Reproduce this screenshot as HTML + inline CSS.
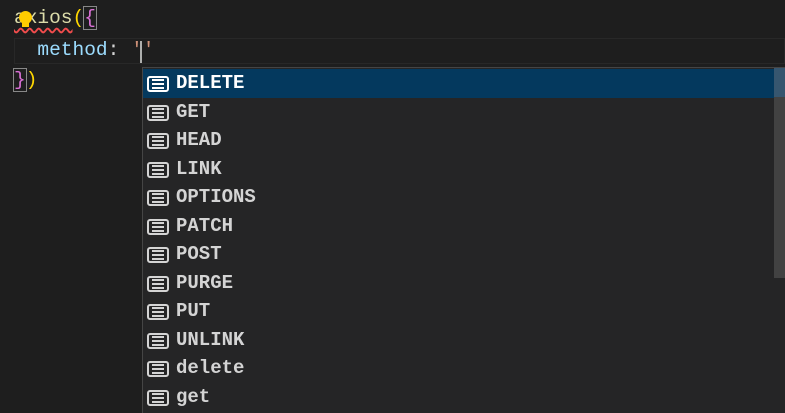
<!DOCTYPE html><html><head><style>
body{margin:0;width:785px;height:408px;background:#1e1e1e;overflow:hidden;position:relative;font-family:"Liberation Mono",monospace;font-size:19.5px}
.l{position:absolute;left:14px;white-space:pre;height:29px;line-height:29px}
.cur{position:absolute;left:14px;top:38px;width:771px;height:26px;border:1px solid #282828;box-sizing:border-box}
.w{position:absolute;left:142px;top:67px;width:643px;height:345px;background:#252526;border-left:1px solid #454545;border-top:1px solid #454545}
.r{position:absolute;left:0;width:631px;height:29px;line-height:29px;color:#d4d4d4;font-weight:bold;font-size:19px}
.r.s{background:#04395e;color:#fff}
.ic{position:absolute;left:4px;top:7px;width:18px;height:12px;border:2px solid currentColor;border-radius:3px}
.ic i{position:absolute;left:3px;width:12px;height:2px;background:currentColor}
.t{position:absolute;left:33px}
.sb{position:absolute;left:631px;top:0;width:12px;height:210px;background:#424242}
</style></head><body>
<div class="cur"></div>
<div class="l" style="top:4px"><span style="color:#dcdcaa;text-decoration:underline wavy #f14c4c;text-underline-offset:4px">axios</span><span style="color:#ffd700">(</span><span style="color:#da70d6;outline:1px solid #888">{</span></div>
<div class="l" style="top:36px">  <span style="color:#9cdcfe">method</span><span style="color:#d4d4d4">: </span><span style="color:#ce9178">''</span></div>
<div style="position:absolute;left:140px;top:41px;width:2px;height:22px;background:#aeafad"></div>
<div class="l" style="top:66px"><span style="color:#da70d6;outline:1px solid #888">}</span><span style="color:#ffd700">)</span></div>
<div style="position:absolute;left:19px;top:11px;width:13px;height:13px;border-radius:50%;background:#ffcc00"></div>
<div style="position:absolute;left:22px;top:22px;width:7px;height:5px;background:#ffcc00"></div>
<div class="w">
<div class="r s" style="top:1px"><span class="ic"><i style="top:1px"></i><i style="top:5px"></i><i style="top:9px"></i></span><span class="t">DELETE</span></div>
<div class="r" style="top:30px"><span class="ic"><i style="top:1px"></i><i style="top:5px"></i><i style="top:9px"></i></span><span class="t">GET</span></div>
<div class="r" style="top:58px"><span class="ic"><i style="top:1px"></i><i style="top:5px"></i><i style="top:9px"></i></span><span class="t">HEAD</span></div>
<div class="r" style="top:87px"><span class="ic"><i style="top:1px"></i><i style="top:5px"></i><i style="top:9px"></i></span><span class="t">LINK</span></div>
<div class="r" style="top:115px"><span class="ic"><i style="top:1px"></i><i style="top:5px"></i><i style="top:9px"></i></span><span class="t">OPTIONS</span></div>
<div class="r" style="top:144px"><span class="ic"><i style="top:1px"></i><i style="top:5px"></i><i style="top:9px"></i></span><span class="t">PATCH</span></div>
<div class="r" style="top:172px"><span class="ic"><i style="top:1px"></i><i style="top:5px"></i><i style="top:9px"></i></span><span class="t">POST</span></div>
<div class="r" style="top:201px"><span class="ic"><i style="top:1px"></i><i style="top:5px"></i><i style="top:9px"></i></span><span class="t">PURGE</span></div>
<div class="r" style="top:229px"><span class="ic"><i style="top:1px"></i><i style="top:5px"></i><i style="top:9px"></i></span><span class="t">PUT</span></div>
<div class="r" style="top:258px"><span class="ic"><i style="top:1px"></i><i style="top:5px"></i><i style="top:9px"></i></span><span class="t">UNLINK</span></div>
<div class="r" style="top:286px"><span class="ic"><i style="top:1px"></i><i style="top:5px"></i><i style="top:9px"></i></span><span class="t">delete</span></div>
<div class="r" style="top:315px"><span class="ic"><i style="top:1px"></i><i style="top:5px"></i><i style="top:9px"></i></span><span class="t">get</span></div>
<div class="sb"><div style="height:29px;background:#37566f"></div></div>
</div>
</body></html>
